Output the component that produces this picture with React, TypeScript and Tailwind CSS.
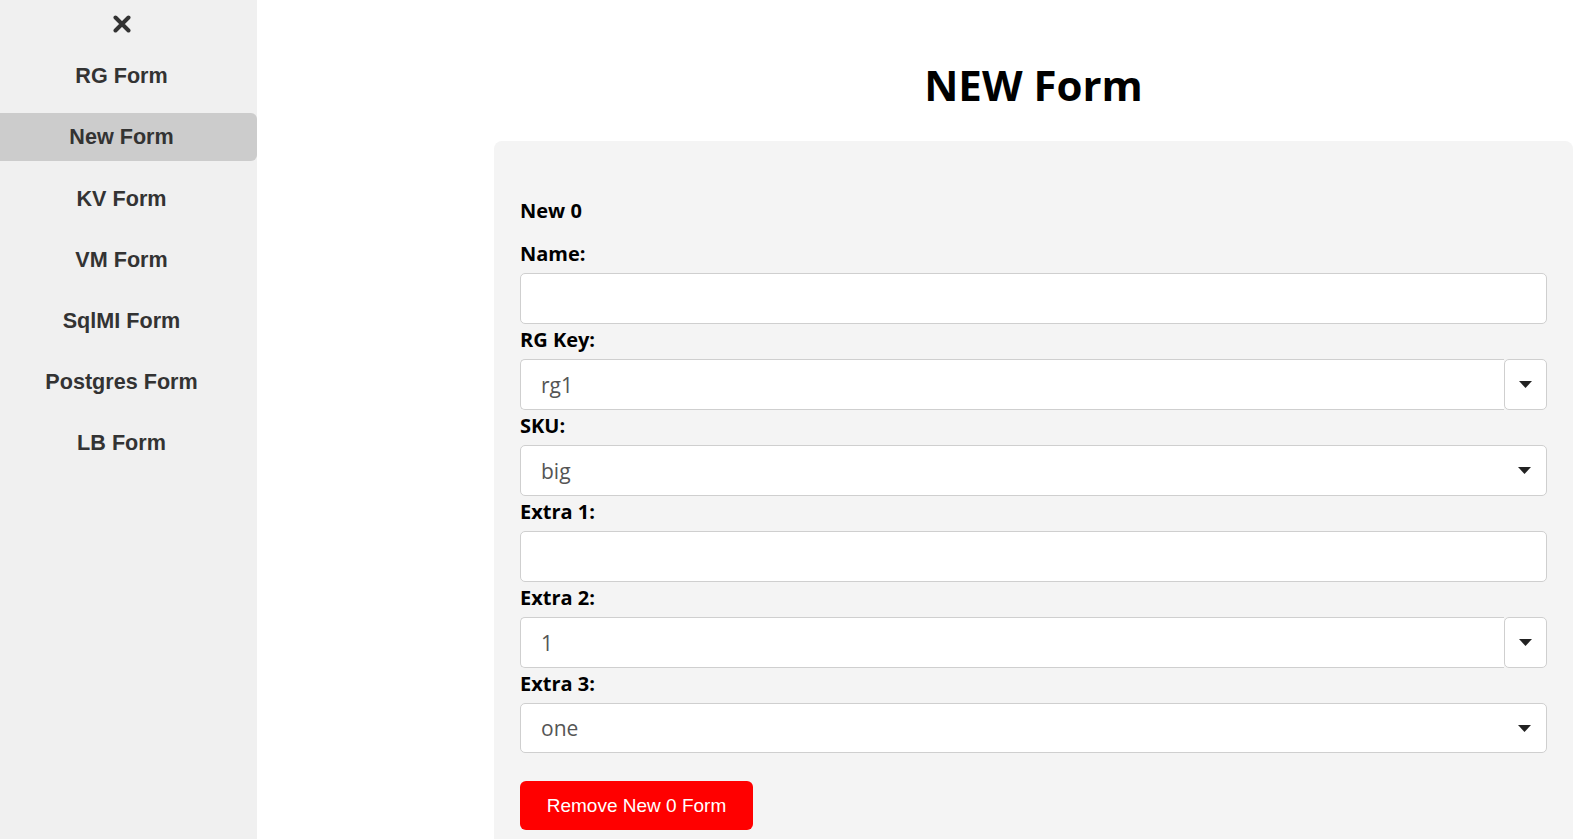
import { useState } from 'react';

const navItems = ['RG Form', 'New Form', 'KV Form', 'VM Form', 'SqlMI Form', 'Postgres Form', 'LB Form'];

function Caret() {
  return (
    <svg width="13" height="7" viewBox="0 0 13 7" className="block">
      <path d="M0 0 L13 0 L6.5 7 Z" fill="#222" />
    </svg>
  );
}

function Label({ children }: { children: React.ReactNode }) {
  return <label className="block pt-[4px] text-[20px] leading-[23.4px] font-bold text-black">{children}</label>;
}

function TextField({ label }: { label: string }) {
  return (
    <div>
      <Label>{label}</Label>
      <input
        type="text"
        className="mt-2 block h-[50.5px] w-full rounded-[5px] border border-[#cfcfcf] bg-white px-5 text-[21px] text-[#555] outline-none"
      />
    </div>
  );
}

function ComboField({ label, value }: { label: string; value: string }) {
  return (
    <div>
      <Label>{label}</Label>
      <div className="mt-2 flex h-[50.5px] w-full">
        <div className="flex flex-1 items-center rounded-l-[5px] border-y border-l border-[#cfcfcf] bg-white pl-5 pt-[2px] text-[21px] text-[#555]">
          {value}
        </div>
        <button className="flex w-[43px] items-center justify-center rounded-[5px] border border-[#cfcfcf] bg-white">
          <Caret />
        </button>
      </div>
    </div>
  );
}

function SelectField({ label, value }: { label: string; value: string }) {
  return (
    <div>
      <Label>{label}</Label>
      <div className="mt-2 flex h-[50.5px] w-full items-center rounded-[5px] border border-[#cfcfcf] bg-white pl-5 text-[21px] text-[#555]">
        <span className="flex-1 pt-[2px]">{value}</span>
        <span className="flex w-[43px] justify-center">
          <Caret />
        </span>
      </div>
    </div>
  );
}

export default function App() {
  const [active, setActive] = useState('New Form');

  return (
    <div className="flex min-h-screen bg-white" style={{ fontFamily: '"Open Sans", "Noto Sans", sans-serif' }}>
      {/* Sidebar */}
      <aside
        className="w-[257px] shrink-0 bg-[#f0f0f0] pt-[12px]"
        style={{ fontFamily: '"Liberation Sans", Arial, sans-serif' }}
      >
        <div className="flex h-[24px] justify-center pr-[14px]">
          <svg width="18" height="18" viewBox="0 0 18 18" className="mt-[3px]">
            <path d="M2.5 2.5 L15.5 15.5 M15.5 2.5 L2.5 15.5" stroke="#333" strokeWidth="4" strokeLinecap="round" />
          </svg>
        </div>
        <nav className="mt-[16px] flex flex-col gap-[13.2px]">
          {navItems.map((item) => (
            <button
              key={item}
              onClick={() => setActive(item)}
              className={`h-[48px] w-full pr-[14px] pt-[1px] text-center text-[21.6px] font-bold text-[#333] ${
                active === item ? 'rounded-r-[6px] bg-[#cccccc]' : ''
              }`}
            >
              {item}
            </button>
          ))}
        </nav>
      </aside>

      {/* Main */}
      <main className="flex-1 pl-[237px] pr-[4px]">
        <h1 className="mt-[56px] text-center text-[42px] leading-[57px] font-bold text-black">NEW Form</h1>
        <div className="mt-[28px] rounded-t-[8px] bg-[#f4f4f4] px-[26px] pt-[55px] pb-[30px]">
          <div className="pt-[3px] text-[20px] leading-[24px] font-bold text-black">New 0</div>
          <div className="mt-[15px] flex flex-col">
            <TextField label="Name:" />
            <ComboField label="RG Key:" value="rg1" />
            <SelectField label="SKU:" value="big" />
            <TextField label="Extra 1:" />
            <ComboField label="Extra 2:" value="1" />
            <SelectField label="Extra 3:" value="one" />
          </div>
          <button
            className="mt-[28px] h-[49px] w-[233px] rounded-[6px] bg-[#ff0000] text-[19px] text-white"
            style={{ fontFamily: '"Liberation Sans", Arial, sans-serif' }}
          >
            Remove New 0 Form
          </button>
        </div>
      </main>
    </div>
  );
}
